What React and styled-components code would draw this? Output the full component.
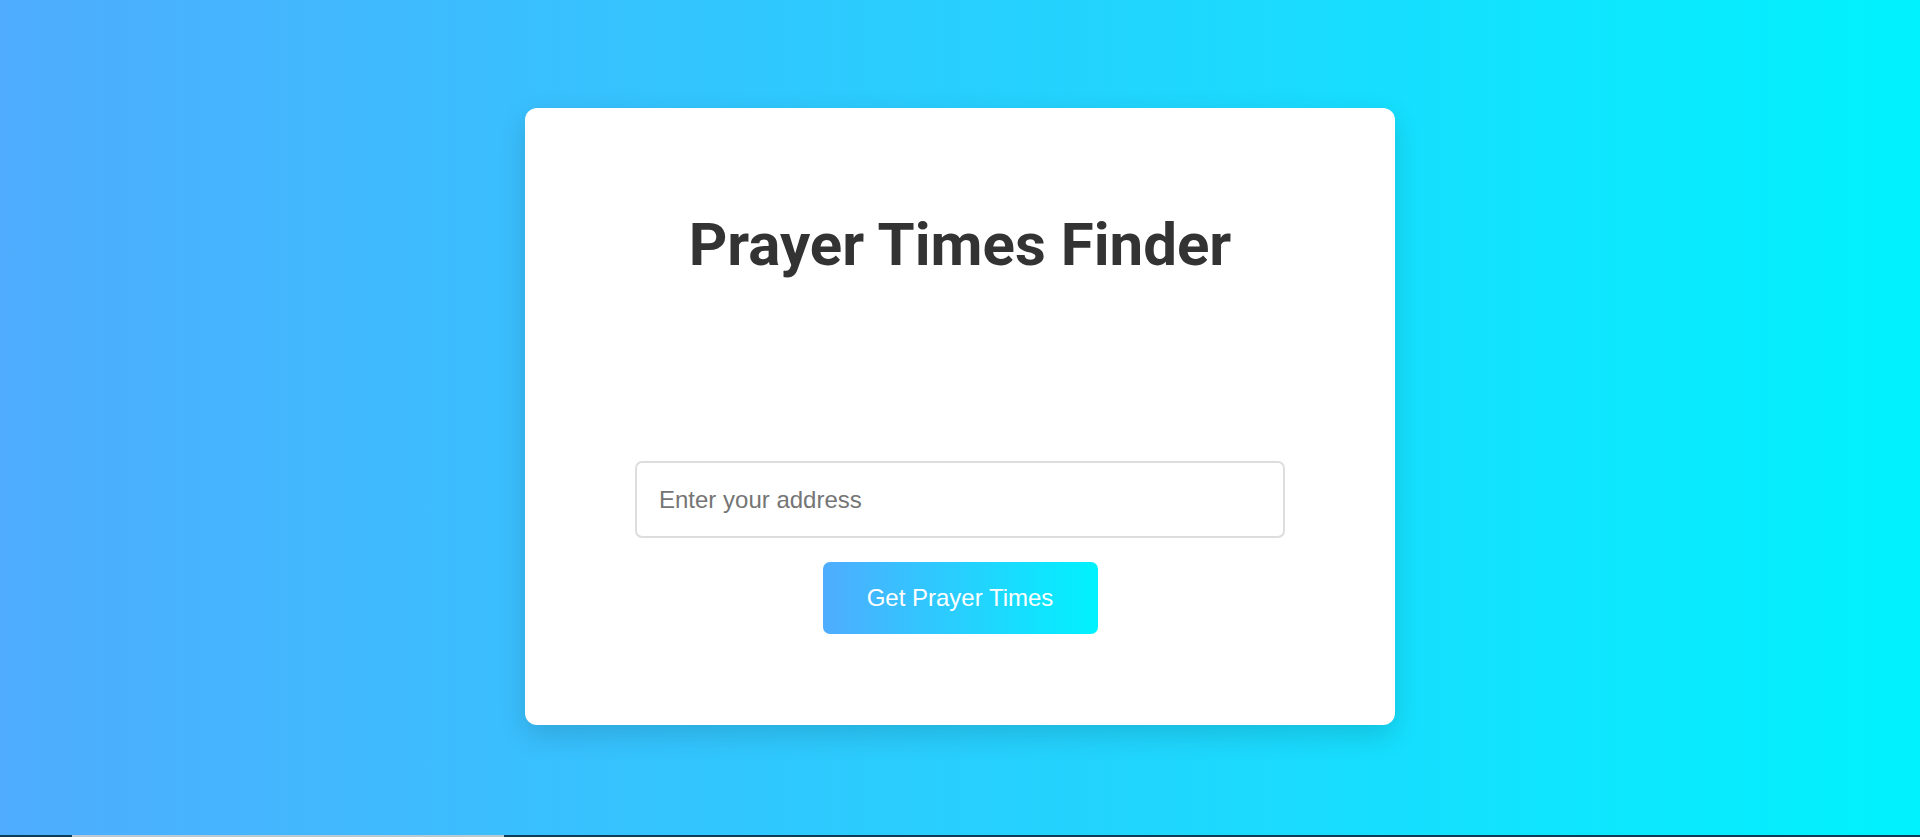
import React, { useState } from 'react';
import styled, { createGlobalStyle } from 'styled-components';

const GlobalStyle = createGlobalStyle`
  * {
    box-sizing: border-box;
  }
  html, body {
    margin: 0;
    padding: 0;
    height: 100%;
    overflow: hidden;
  }
  body {
    font-family: Roboto, "Liberation Sans", Arial, sans-serif;
  }
`;

const Page = styled.div`
  display: flex;
  flex-direction: column;
  height: 100vh;
`;

const Main = styled.main`
  flex: 1;
  display: flex;
  align-items: flex-start;
  justify-content: center;
  padding-top: 108px;
  background: linear-gradient(90deg, #4facfe 0%, #00f2fe 100%);
`;

const Card = styled.div`
  width: 870px;
  height: 617px;
  display: flex;
  flex-direction: column;
  align-items: center;
  padding: 102px 110px 0;
  background: #ffffff;
  border-radius: 12px;
  box-shadow: 0 10px 28px rgba(0, 0, 0, 0.14);
`;

const Title = styled.h1`
  margin: 0;
  font-family: Roboto, "Liberation Sans", sans-serif;
  font-size: 60px;
  line-height: 70px;
  font-weight: 700;
  color: #333333;
`;

const Results = styled.div`
  height: 181px;
`;

const Form = styled.form`
  display: flex;
  flex-direction: column;
  align-items: center;
  gap: 24px;
  width: 100%;
`;

const AddressInput = styled.input`
  width: 650px;
  height: 77px;
  padding: 0 22px;
  border: 2px solid #dddddd;
  border-radius: 7px;
  font-family: "Liberation Sans", Arial, sans-serif;
  font-size: 24px;
  color: #333;
  outline: none;

  &::placeholder {
    color: #757575;
  }
`;

const SubmitButton = styled.button`
  width: 275px;
  height: 72px;
  border: none;
  border-radius: 7px;
  background: linear-gradient(90deg, #4facfe 0%, #00f2fe 100%);
  color: #ffffff;
  font-family: "Liberation Sans", Arial, sans-serif;
  font-size: 24px;
  cursor: pointer;
`;

const Strip = styled.div`
  height: 2px;
  display: flex;
  background: #0d3d57;
`;

const StripThumb = styled.div`
  margin-left: 72px;
  width: 432px;
  background: #b9c9d3;
`;

const App = () => {
  const [address, setAddress] = useState('');

  const handleSubmit = (e) => {
    e.preventDefault();
  };

  return (
    <>
      <GlobalStyle />
      <Page>
        <Main>
          <Card>
            <Title>Prayer Times Finder</Title>
            <Results />
            <Form onSubmit={handleSubmit}>
              <AddressInput
                type="text"
                placeholder="Enter your address"
                value={address}
                onChange={(e) => setAddress(e.target.value)}
              />
              <SubmitButton type="submit">Get Prayer Times</SubmitButton>
            </Form>
          </Card>
        </Main>
        <Strip>
          <StripThumb />
        </Strip>
      </Page>
    </>
  );
};

export default App;
